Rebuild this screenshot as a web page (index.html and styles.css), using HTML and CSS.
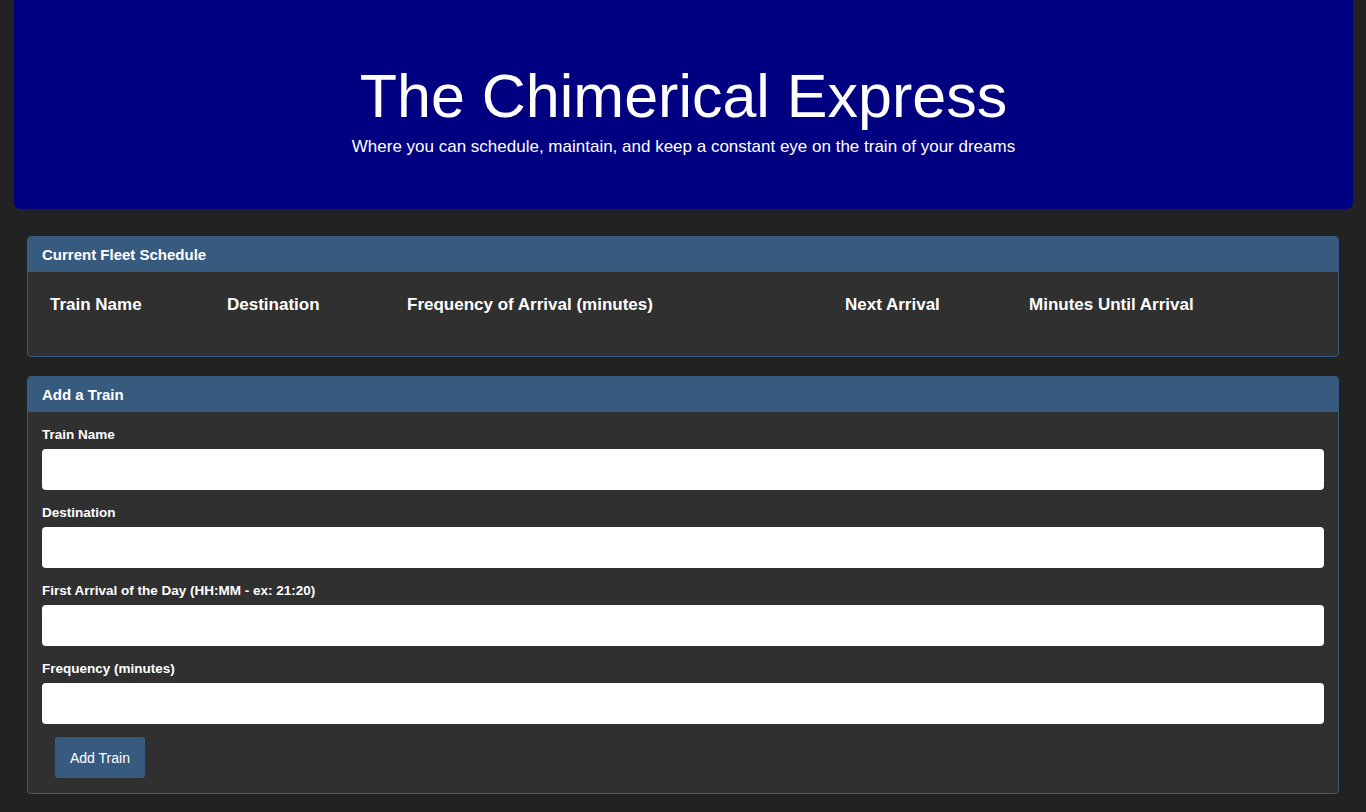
FILE: index.html
```html
<!DOCTYPE html>
<html lang="en">
<head>
<meta charset="utf-8">
<title>The Chimerical Express</title>
<link rel="stylesheet" href="styles.css">
</head>
<body>
<header class="jumbotron">
  <h1 class="title">The Chimerical Express</h1>
  <p class="subtitle">Where you can schedule, maintain, and keep a constant eye on the train of your dreams</p>
</header>
<main class="content">
  <section class="panel">
    <div class="panel-heading">Current Fleet Schedule</div>
    <div class="panel-body">
      <table class="schedule">
        <thead>
          <tr>
            <th class="c1">Train Name</th>
            <th class="c2">Destination</th>
            <th class="c3">Frequency of Arrival (minutes)</th>
            <th class="c4">Next Arrival</th>
            <th class="c5">Minutes Until Arrival</th>
          </tr>
        </thead>
        <tbody></tbody>
      </table>
    </div>
  </section>
  <section class="panel">
    <div class="panel-heading">Add a Train</div>
    <form class="panel-body form">
      <div class="group">
        <label for="name">Train Name</label>
        <input id="name" type="text">
      </div>
      <div class="group">
        <label for="dest">Destination</label>
        <input id="dest" type="text">
      </div>
      <div class="group">
        <label for="first">First Arrival of the Day (HH:MM - ex: 21:20)</label>
        <input id="first" type="text">
      </div>
      <div class="group">
        <label for="freq">Frequency (minutes)</label>
        <input id="freq" type="text">
      </div>
      <button type="button" class="btn">Add Train</button>
    </form>
  </section>
</main>
</body>
</html>
```
FILE: styles.css
```css
* { box-sizing: border-box; }
html, body { margin: 0; padding: 0; }
body {
  background: #222222;
  color: #ffffff;
  font-family: "Liberation Sans", Arial, Helvetica, sans-serif;
  font-size: 15px;
}
.jumbotron {
  margin: 0 13px 0 14px;
  background: #000080;
  border-radius: 0 0 6px 6px;
  height: 209px;
  padding-top: 62px;
  text-align: center;
}
.title {
  margin: 0;
  font-size: 61px;
  font-weight: 400;
  line-height: 69px;
}
.subtitle {
  margin: 4px 0 0;
  font-size: 17px;
  line-height: 24px;
}
.content {
  padding: 27px 27px 0;
}
.panel {
  border: 1px solid #375a7f;
  border-radius: 4px;
  background: #303030;
  margin-bottom: 19px;
  overflow: hidden;
}
.panel-heading {
  background: #375a7f;
  height: 35px;
  padding: 0 14px;
  font-size: 15px;
  font-weight: 700;
  line-height: 35px;
}
.panel-body {
  padding: 15px 14px 14px;
}
.schedule {
  width: 100%;
  border-collapse: collapse;
  margin-bottom: 20px;
}
.schedule th {
  text-align: left;
  padding: 9px 8px 8px;
  font-size: 17px;
  line-height: 18px;
  font-weight: 700;
}
.c1 { width: 177px; }
.c2 { width: 180px; }
.c3 { width: 438px; }
.c4 { width: 184px; }
.form { display: flex; flex-direction: column; align-items: stretch; padding-top: 15px; padding-bottom: 15px; }
.group { margin-bottom: 15px; }
.group:nth-last-of-type(1) { margin-bottom: 13px; }
label {
  display: block;
  font-size: 13.5px;
  font-weight: 700;
  line-height: 15px;
  margin-bottom: 7px;
}
input {
  display: block;
  width: 100%;
  height: 41px;
  border: 0;
  border-radius: 4px;
  background: #ffffff;
  padding: 6px 12px;
  font-family: inherit;
  font-size: 15px;
}
.btn {
  align-self: flex-start;
  margin-left: 13px;
  height: 41px;
  padding: 0 15px;
  border: 0;
  border-radius: 3px;
  background: #375a7f;
  color: #ffffff;
  font-family: "Liberation Sans", Arial, sans-serif;
  font-size: 14px;
}
```
